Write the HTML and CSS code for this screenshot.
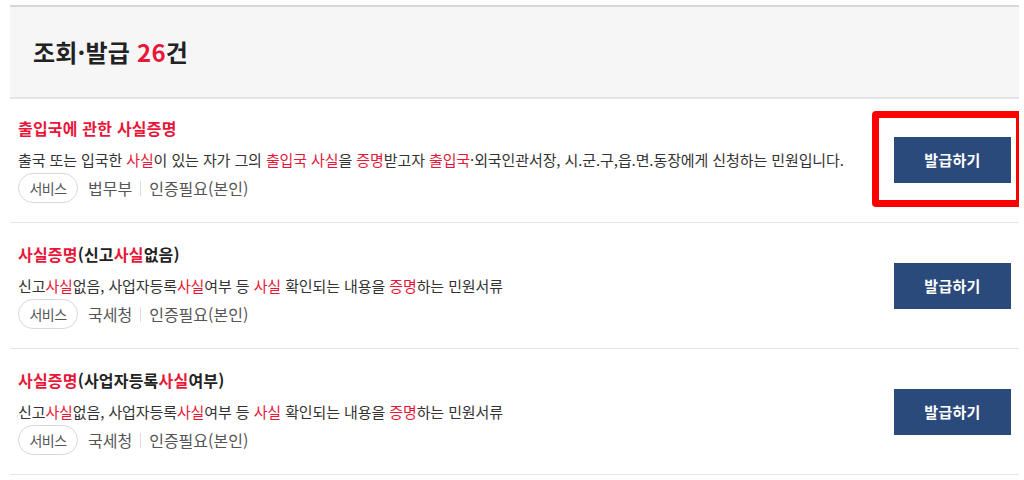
FILE: index.html
```html
<!DOCTYPE html>
<html lang="ko">
<head>
<meta charset="utf-8">
<title>조회·발급</title>
<link rel="stylesheet" href="styles.css">
</head>
<body>
<div class="wrap">
  <div class="head">
    <h2 class="head-title">조회·발급 <em class="count">26</em>건</h2>
  </div>
  <ul class="list">
    <li class="item">
      <div class="info">
        <p class="title"><span class="hl">출입국에 관한 사실증명</span></p>
        <p class="desc">출국 또는 입국한 <span class="hl">사실</span>이 있는 자가 그의 <span class="hl">출입국 사실</span>을 <span class="hl">증명</span>받고자 <span class="hl">출입국</span>·외국인관서장, 시.군.구,읍.면.동장에게 신청하는 민원입니다.</p>
        <div class="meta">
          <span class="pill">서비스</span>
          <span class="org">법무부</span>
          <span class="sep"></span>
          <span class="auth">인증필요(본인)</span>
        </div>
      </div>
      <div class="action">
        <button class="btn">발급하기</button>
        <span class="mark"></span>
      </div>
    </li>
    <li class="item">
      <div class="info">
        <p class="title"><span class="hl">사실증명</span>(신고<span class="hl">사실</span>없음)</p>
        <p class="desc">신고<span class="hl">사실</span>없음, 사업자등록<span class="hl">사실</span>여부 등 <span class="hl">사실</span> 확인되는 내용을 <span class="hl">증명</span>하는 민원서류</p>
        <div class="meta">
          <span class="pill">서비스</span>
          <span class="org">국세청</span>
          <span class="sep"></span>
          <span class="auth">인증필요(본인)</span>
        </div>
      </div>
      <div class="action">
        <button class="btn">발급하기</button>
      </div>
    </li>
    <li class="item">
      <div class="info">
        <p class="title"><span class="hl">사실증명</span>(사업자등록<span class="hl">사실</span>여부)</p>
        <p class="desc">신고<span class="hl">사실</span>없음, 사업자등록<span class="hl">사실</span>여부 등 <span class="hl">사실</span> 확인되는 내용을 <span class="hl">증명</span>하는 민원서류</p>
        <div class="meta">
          <span class="pill">서비스</span>
          <span class="org">국세청</span>
          <span class="sep"></span>
          <span class="auth">인증필요(본인)</span>
        </div>
      </div>
      <div class="action">
        <button class="btn">발급하기</button>
      </div>
    </li>
  </ul>
</div>
</body>
</html>
```

FILE: styles.css
```css
* { box-sizing: border-box; }
html, body { background: #fff; }
body {
  margin: 5px 5px 0 10px;
  font-family: "Noto Sans CJK KR", "Noto Sans", sans-serif;
  color: #333;
}
p, h2, ul { margin: 0; padding: 0; }
ul { list-style: none; }

.head {
  height: 94px;
  background: #f6f6f6;
  border-top: 2px solid #d6d6d6;
  border-bottom: 2px solid #e3e3e3;
  display: flex;
  align-items: center;
  padding-left: 23px;
}
.head-title {
  font-size: 24px;
  font-weight: 700;
  letter-spacing: 0.2px;
  color: #222;
  line-height: 1;
}
.count { font-style: normal; color: #e8173a; }

.item {
  display: flex;
  align-items: center;
  justify-content: space-between;
  padding: 19px 8px;
  border-bottom: 1px solid #e6e6e6;
}
.item:first-child { padding-top: 17px; }
.info { display: flex; flex-direction: column; }
.title {
  font-size: 16px;
  font-weight: 700;
  line-height: 24px;
  letter-spacing: 0.2px;
  color: #222;
}
.desc {
  margin-top: 8px;
  font-size: 15px;
  line-height: 24px;
  letter-spacing: -0.1px;
  color: #333;
}
.hl { color: #e8173a; }
.meta {
  margin-top: 1px;
  display: flex;
  align-items: center;
  height: 30px;
  font-size: 16px;
  color: #555;
  letter-spacing: 0;
}
.pill {
  width: 60px;
  height: 30px;
  border: 1px solid #d8d8d8;
  border-radius: 15px;
  display: flex;
  align-items: center;
  justify-content: center;
  font-size: 14px;
  letter-spacing: -0.5px;
  color: #555;
  margin-right: 10px;
}
.sep {
  width: 1px;
  height: 15px;
  background: #dcdcdc;
  margin: 0 8px;
}

.action { position: relative; }
.btn {
  width: 117px;
  height: 46px;
  border: 0;
  background: #2a4a7c;
  color: #fff;
  font-family: inherit;
  font-size: 15px;
  font-weight: 700;
  letter-spacing: 0.3px;
  cursor: pointer;
}
.mark {
  position: absolute;
  left: -22px;
  top: -26px;
  right: -12px;
  bottom: -24px;
  border: 7px solid #ff0000;
  border-radius: 4px;
  pointer-events: none;
}
```
